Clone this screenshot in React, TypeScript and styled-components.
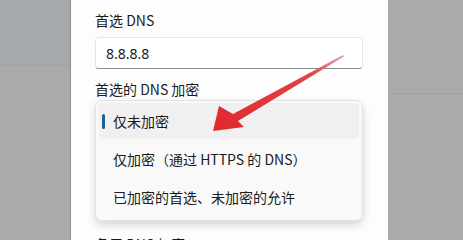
import React from 'react';
import styled, { createGlobalStyle } from 'styled-components';

const GlobalStyle = createGlobalStyle`
  html, body {
    margin: 0;
    padding: 0;
    background: #a9aaaa;
  }
  body {
    font-family: "Noto Sans CJK SC", "Noto Sans", "Liberation Sans", sans-serif;
    color: #1b1b1b;
    overflow: hidden;
  }
`;

const Screen = styled.div`
  position: relative;
  width: 463px;
  height: 240px;
  display: flex;
  overflow: hidden;
`;

const Side = styled.div<{ $w: number; $band: number; $dark: string; $light: string }>`
  width: ${p => p.$w}px;
  flex-shrink: 0;
  background: linear-gradient(
    to bottom,
    ${p => p.$light} 0,
    ${p => p.$light} ${p => p.$band}px,
    #9fa1a1 ${p => p.$band}px,
    #9fa1a1 ${p => p.$band + 1}px,
    ${p => p.$dark} ${p => p.$band + 1}px
  );
`;

const Panel = styled.div`
  width: 317px;
  flex-shrink: 0;
  background: #fdfdfd;
  box-shadow: -1px 0 0 #8c8e8f, 1px 0 0 #97999a;
  padding: 10px 25px 0 24px;
  box-sizing: border-box;
  display: flex;
  flex-direction: column;

  & > * {
    flex-shrink: 0;
  }
`;

const Label = styled.div<{ $gap?: number }>`
  font-size: 14px;
  line-height: 20px;
  margin-top: ${p => p.$gap ?? 0}px;
  white-space: nowrap;
`;

const Input = styled.div`
  margin-top: 7px;
  height: 32px;
  box-sizing: border-box;
  background: #ffffff;
  border: 1px solid #e6e6e6;
  border-bottom: 1px solid #8d8d8d;
  border-radius: 4px;
  padding: 0 10px;
  display: flex;
  align-items: center;
  font-family: "Noto Sans", "Liberation Sans", sans-serif;
  font-size: 14px;
`;

const Popup = styled.div`
  margin-top: 1px;
  background: #f9f9f9;
  border: 1px solid #e2e2e2;
  border-radius: 7px;
  box-shadow: 0 4px 8px rgba(0, 0, 0, 0.16);
  padding: 2px 3px 5px;
  display: flex;
  flex-direction: column;
  gap: 2px;
`;

const Option = styled.div<{ $selected?: boolean }>`
  position: relative;
  height: 36px;
  flex-shrink: 0;
  border-radius: 4px;
  background: ${p => (p.$selected ? '#f0f0f0' : 'transparent')};
  display: flex;
  align-items: center;
  padding-left: 14px;
  font-size: 14px;
  white-space: nowrap;
`;

const Accent = styled.span`
  position: absolute;
  left: 3px;
  top: 11px;
  width: 3px;
  height: 15px;
  border-radius: 2px;
  background: #1b5f96;
`;

const Overlay = styled.svg`
  position: absolute;
  left: 0;
  top: 0;
  pointer-events: none;
`;

const options = ['仅未加密', '仅加密（通过 HTTPS 的 DNS）', '已加密的首选、未加密的允许'];

export default function App() {
  return (
    <>
      <GlobalStyle />
      <Screen>
        <Side $w={71} $band={65} $light="#a6a9ac" $dark="#a9aaa9" />
        <Panel>
          <Label>首选 DNS</Label>
          <Input>8.8.8.8</Input>
          <Label $gap={10}>首选的 DNS 加密</Label>
          <Popup>
            {options.map((o, i) => (
              <Option key={o} $selected={i === 0}>
                {i === 0 && <Accent />}
                {o}
              </Option>
            ))}
          </Popup>
          <Label $gap={13}>备用 DNS 加密</Label>
        </Panel>
        <Side $w={75} $band={93} $light="#a9aaaa" $dark="#aaabab" />
        <Overlay width="463" height="240" viewBox="0 0 463 240">
          <defs>
            <linearGradient id="arr" x1="343" y1="55" x2="213" y2="131" gradientUnits="userSpaceOnUse">
              <stop offset="0" stopColor="#e8a0a4" />
              <stop offset="0.25" stopColor="#e04448" />
              <stop offset="1" stopColor="#e1282c" />
            </linearGradient>
          </defs>
          {/* tapering shaft + head */}
          <polygon
            points="343,55 344,56.5 238,121 244,127 213,131 219,106 233,114"
            fill="url(#arr)"
          />
        </Overlay>
      </Screen>
    </>
  );
}
